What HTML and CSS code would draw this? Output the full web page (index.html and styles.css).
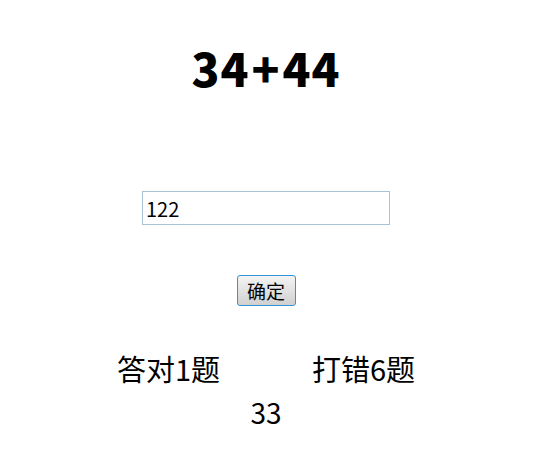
FILE: index.html
```html
<!DOCTYPE html>
<html lang="zh-CN">
<head>
<meta charset="utf-8">
<title>计算</title>
<link rel="stylesheet" href="styles.css">
</head>
<body>
<div class="page">
  <h1 class="question">34<span class="op">+</span>44</h1>
  <input class="answer" type="text" value="122">
  <button class="submit" type="button">确定</button>
  <div class="stats">
    <span class="stat">答对1题</span>
    <span class="stat">打错6题</span>
  </div>
  <div class="timer">33</div>
</div>
</body>
</html>
```
FILE: styles.css
```css
html, body {
  margin: 0;
  padding: 0;
  background: #fff;
}
.page {
  width: 532px;
  display: flex;
  flex-direction: column;
  align-items: center;
  font-family: "Noto Sans CJK SC", "Open Sans", sans-serif;
  color: #000;
}
.question {
  margin: 44px 0 0 0;
  font-size: 46px;
  line-height: 46px;
  font-weight: 900;
  letter-spacing: 1px;
}
.op {
  margin: 0 2px;
}
.answer {
  margin-top: 101px;
  box-sizing: border-box;
  width: 248px;
  height: 34px;
  border: 1px solid #a9c3d6;
  padding: 0 3px;
  font-family: "Noto Sans CJK SC", "Open Sans", sans-serif;
  font-size: 20px;
  color: #000;
  outline: none;
}
.submit {
  margin-top: 50px;
  box-sizing: border-box;
  width: 59px;
  height: 31px;
  border: 1px solid #2f97d8;
  border-radius: 3px;
  background: linear-gradient(#f4f4f4, #e2e2e2 50%, #d0d0d0);
  font-family: "Noto Sans CJK SC", sans-serif;
  font-size: 19px;
  line-height: 1;
  padding: 0;
  color: #000;
}
.stats {
  margin-top: 44px;
  display: flex;
  gap: 92px;
  font-size: 29px;
  line-height: 36px;
}
.timer {
  margin-top: 8px;
  font-size: 28px;
  line-height: 36px;
}
```
